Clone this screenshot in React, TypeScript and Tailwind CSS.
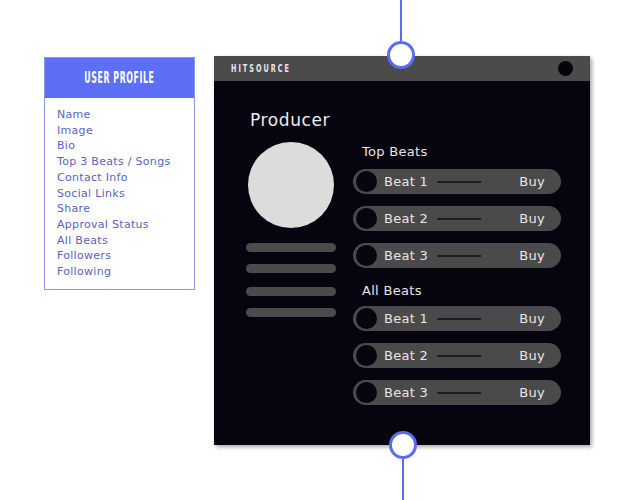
import React from "react";

const items = [
  "Name",
  "Image",
  "Bio",
  "Top 3 Beats / Songs",
  "Contact Info",
  "Social Links",
  "Share",
  "Approval Status",
  "All Beats",
  "Followers",
  "Following",
];

const sans = { fontFamily: '"DejaVu Sans", "Open Sans", sans-serif' };
const cond = { fontFamily: '"Liberation Sans Narrow", "DejaVu Sans Condensed", sans-serif' };

function Pill({ label }: { label: string }) {
  return (
    <div className="flex h-[25px] w-[208px] items-center rounded-full bg-[#4a4a4a] pl-[3px] pr-[16px]">
      <div className="h-[21px] w-[21px] shrink-0 rounded-full bg-[#07060e]" />
      <span className="ml-[7px] w-[53px] text-[13px] leading-[16px] tracking-[0.3px] text-[#e6e6e6]">
        {label}
      </span>
      <div className="h-[2px] w-[44px] bg-[#1e1e1e]" />
      <span className="ml-auto text-[13px] leading-[16px] tracking-[0.3px] text-[#e6e6e6]">Buy</span>
    </div>
  );
}

export default function App() {
  return (
    <div className="relative h-[500px] w-[640px] overflow-hidden bg-white" style={sans}>
      <div className="flex items-start pl-[44px] pt-[56px]">
        {/* User profile card */}
        <div className="mt-[1px] flex h-[233px] w-[151px] flex-col border border-[#8d96ee] bg-white">
          <div className="flex h-[40px] items-center justify-center bg-[#5c6ff6]">
            <span
              className="inline-block scale-x-[0.58] text-[15px] font-bold leading-[16px] tracking-[1px] text-white"
              style={cond}
            >
              USER PROFILE
            </span>
          </div>
          <ul className="flex flex-col pl-[12px] pt-[9px]">
            {items.map((t) => (
              <li key={t} className="text-[11px] leading-[15.7px] tracking-[0.3px] text-[#5b62c6]">
                {t}
              </li>
            ))}
          </ul>
        </div>

        {/* Main panel */}
        <div className="ml-[19px] flex h-[389px] w-[376px] flex-col bg-[#06050f] shadow-[2px_2px_4px_rgba(0,0,0,0.35)]">
          <div className="flex h-[25px] items-center justify-between bg-[#4b4b4b] pl-[17px] pr-[17px]">
            <span
              className="inline-block origin-left scale-x-[0.72] text-[10px] font-bold leading-[10px] tracking-[2.8px] text-[#e8e8e8]"
              style={cond}
            >
              HITSOURCE
            </span>
            <div className="h-[15px] w-[15px] rounded-full bg-[#05040b]" />
          </div>
          <div className="flex">
            <div className="flex w-[139px] flex-col pl-[32px] pt-[29px]">
              <span className="ml-[4px] text-[17px] leading-[20px] tracking-[0.6px] text-[#ececec]">Producer</span>
              <div className="ml-[2px] mt-[12px] h-[86px] w-[86px] rounded-full bg-[#dcdcdc]" />
              <div className="mt-[15px] h-[9px] w-[90px] rounded-full bg-[#4b4b4b]" />
              <div className="mt-[12px] h-[9px] w-[90px] rounded-full bg-[#4b4b4b]" />
              <div className="mt-[14px] h-[9px] w-[90px] rounded-full bg-[#4b4b4b]" />
              <div className="mt-[12px] h-[9px] w-[90px] rounded-full bg-[#4b4b4b]" />
            </div>
            <div className="flex flex-col pt-[63px]">
              <span className="ml-[9px] text-[13px] leading-[16px] tracking-[0.3px] text-[#e6e6e6]">Top Beats</span>
              <div className="mt-[9px] flex flex-col gap-3">
                <Pill label="Beat 1" />
                <Pill label="Beat 2" />
                <Pill label="Beat 3" />
              </div>
              <span className="ml-[9px] mt-[15px] text-[13px] leading-[16px] tracking-[0.3px] text-[#e6e6e6]">All Beats</span>
              <div className="mt-[7px] flex flex-col gap-3">
                <Pill label="Beat 1" />
                <Pill label="Beat 2" />
                <Pill label="Beat 3" />
              </div>
            </div>
          </div>
        </div>
      </div>

      {/* connectors */}
      <div className="absolute left-[400px] top-0 h-[42px] w-[2px] bg-[#5c6cf0]" />
      <div className="absolute left-[387px] top-[41px] h-[28px] w-[28px] rounded-full border-[3px] border-[#5c6cf0] bg-white" />
      <div className="absolute left-[389px] top-[431px] h-[28px] w-[28px] rounded-full border-[3px] border-[#5c6cf0] bg-white" />
      <div className="absolute left-[402px] top-[458px] h-[42px] w-[2px] bg-[#5c6cf0]" />
    </div>
  );
}
